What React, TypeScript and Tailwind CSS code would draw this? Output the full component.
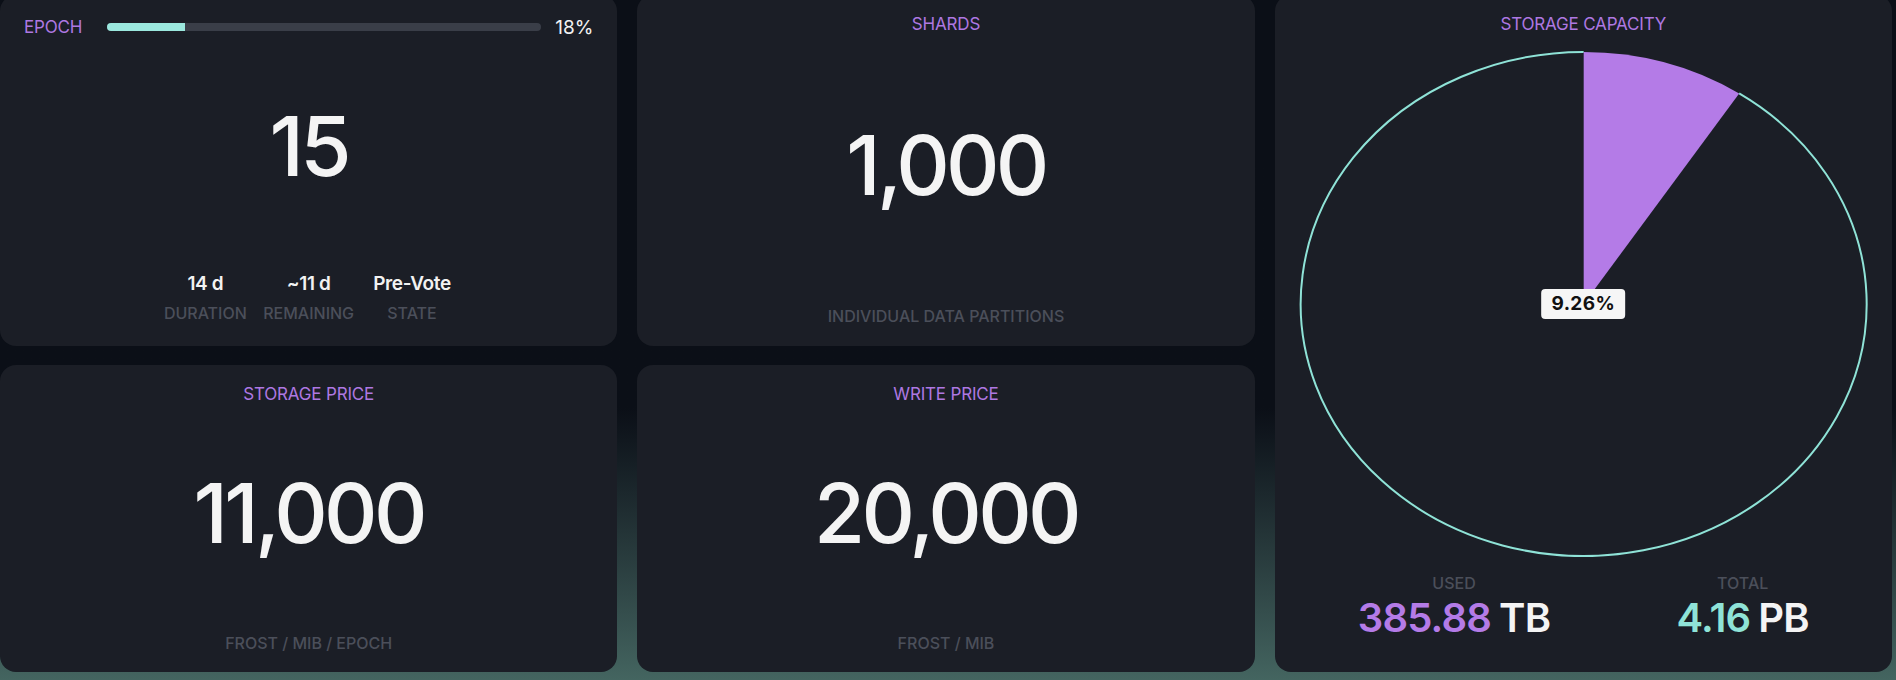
import React from "react";

const epoch = { number: 15, progress: 18, duration: "14 d", remaining: "~11 d", state: "Pre-Vote" };
const usedPct = 9.26;

function Card({ className = "", children }: { className?: string; children: React.ReactNode }) {
  return <div className={`rounded-2xl bg-[#1b1e26] flex flex-col ${className}`}>{children}</div>;
}

function Label({ children, className = "" }: { children: React.ReactNode; className?: string }) {
  return <div className={`text-[17px] leading-none text-[#ae78e2] uppercase tracking-[-0.01em] ${className}`}>{children}</div>;
}

function Sub({ children, className = "" }: { children: React.ReactNode; className?: string }) {
  return <div className={`text-base leading-none font-medium text-[#4b4f5a] uppercase ${className}`}>{children}</div>;
}

function Big({ children }: { children: React.ReactNode }) {
  return <span className="text-[83px] leading-none font-medium text-[#f4f4f4] tracking-[-0.045em]">{children}</span>;
}

function StatCard({ title, value, sub, bottom, shift }: { title: string; value: string; sub: string; bottom: string; shift: string }) {
  return (
    <Card>
      <Label className="mt-[21px] text-center">{title}</Label>
      <div className={`flex-1 flex items-center justify-center ${shift}`}>
        <Big>{value}</Big>
      </div>
      <Sub className={`text-center ${bottom}`}>{sub}</Sub>
    </Card>
  );
}

function Pie() {
  const W = 569;
  const H = 506;
  const cx = W / 2;
  const cy = H / 2;
  const rx = 283;
  const ry = 252;
  const t = (usedPct / 100) * Math.PI * 2;
  const ex = cx + rx * Math.sin(t);
  const ey = cy - ry * Math.cos(t);
  return (
    <svg width="100%" height="100%" viewBox={`0 0 ${W} ${H}`}>
      <path
        d={`M ${ex} ${ey} A ${rx} ${ry} 0 1 1 ${cx} ${cy - ry}`}
        fill="none"
        stroke="#8fe3d7"
        strokeWidth="2"
      />
      <path d={`M ${cx} ${cy} L ${cx} ${cy - ry} A ${rx} ${ry} 0 0 1 ${ex} ${ey} Z`} fill="#b47be7" />
    </svg>
  );
}

export default function App() {
  return (
    <div className="h-[680px] overflow-hidden bg-linear-to-b from-[#0b0f17] from-[60%] to-[#446560] font-['Inter',sans-serif]">
      <div className="-mt-[5px] w-[1892px] grid grid-cols-3 grid-rows-[351px_307px] gap-x-5 gap-y-[19px]">
        {/* epoch */}
        <Card>
          <div className="flex items-center h-5 mt-[22px] px-6">
            <Label>Epoch</Label>
            <div className="ml-[25px] mr-[14px] flex-1 h-2 rounded-full bg-[#3a3e48] overflow-hidden">
              <div className="h-full bg-[#9be8de]" style={{ width: `${epoch.progress}%` }} />
            </div>
            <span className="text-[19px] leading-none text-[#f2f2f2]">{epoch.progress}%</span>
          </div>
          <div className="flex-1 flex items-center justify-center pb-[18px]">
            <Big>{epoch.number}</Big>
          </div>
          <div className="grid grid-cols-3 w-[310px] mx-auto pb-[25px] text-center">
            {[
              [epoch.duration, "Duration"],
              [epoch.remaining, "Remaining"],
              [epoch.state, "State"],
            ].map(([v, l]) => (
              <div key={l} className="flex flex-col items-center">
                <span className="text-[19px] leading-none font-semibold tracking-[-0.02em] text-[#f2f2f2]">{v}</span>
                <Sub className="mt-3">{l}</Sub>
              </div>
            ))}
          </div>
        </Card>

        <StatCard title="Shards" value="1,000" sub="Individual data partitions" bottom="mb-[22px]" shift="pb-[11px]" />

        {/* storage capacity */}
        <Card className="row-span-2">
          <Label className="mt-[21px] text-center">Storage Capacity</Label>
          <div className="relative mx-6 mt-[18px] h-[506px]">
            <Pie />
            <div className="absolute left-1/2 top-1/2 -translate-x-1/2 -translate-y-1/2 h-[30px] px-[10px] flex items-center rounded bg-[#f6f6f6] text-[19px] font-bold tracking-[0.02em] text-[#111]">
              {usedPct}%
            </div>
          </div>
          <div className="flex justify-around px-5 mt-[18px]">
            <div className="flex flex-col items-center">
              <Sub>Used</Sub>
              <div className="flex items-baseline gap-2 mt-[7px] text-[40px] leading-none font-semibold tracking-[-0.02em]">
                <span className="text-[#b47be7]">385.88</span>
                <span className="text-[#f4f4f4]">TB</span>
              </div>
            </div>
            <div className="flex flex-col items-center">
              <Sub>Total</Sub>
              <div className="flex items-baseline gap-2 mt-[7px] text-[40px] leading-none font-semibold tracking-[-0.02em]">
                <span className="text-[#8fe3d7]">4.16</span>
                <span className="text-[#f4f4f4]">PB</span>
              </div>
            </div>
          </div>
        </Card>

        <StatCard title="Storage Price" value="11,000" sub="Frost / MiB / Epoch" bottom="mb-[21px]" shift="pb-3" />
        <StatCard title="Write Price" value="20,000" sub="Frost / MiB" bottom="mb-[21px]" shift="pb-3" />
      </div>
    </div>
  );
}
